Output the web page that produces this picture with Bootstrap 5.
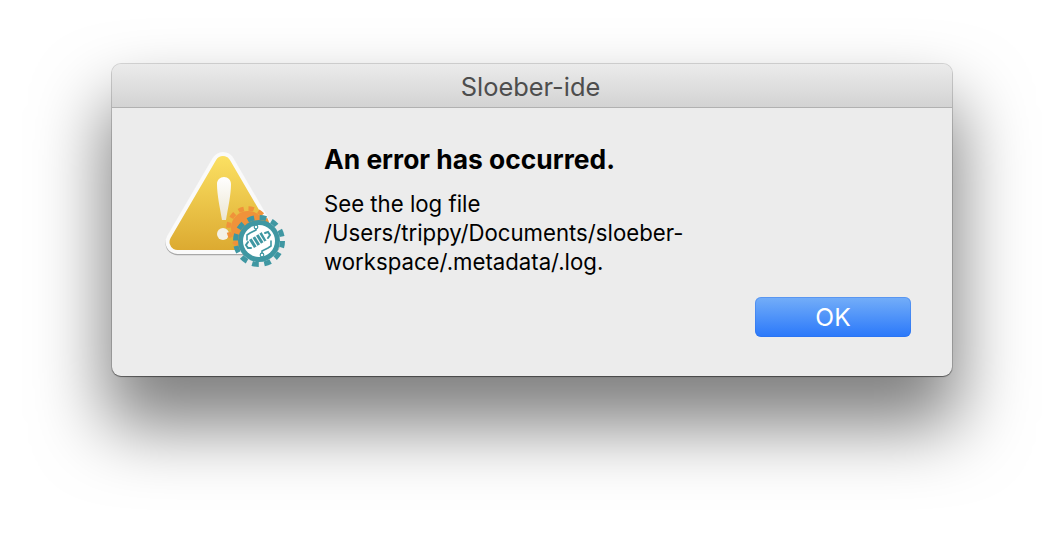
<!DOCTYPE html>
<html lang="en">
<head>
    <meta charset="UTF-8">
    <meta name="viewport" content="width=device-width, initial-scale=1.0">
    <title>Sloeber-ide</title>
    <link href="https://cdn.jsdelivr.net/npm/bootstrap@5.3.0/dist/css/bootstrap.min.css" rel="stylesheet">
    <style>
        html, body { height: 100%; }
        body { background: #fff; overflow: hidden; font-family: Inter, "Liberation Sans", sans-serif; color: #000; }
        .dlg-stage { padding: 64px 0 0 112px; }
        .dlg-window { width: 840px; height: 312px; background: #ececec; border-radius: 9px; box-shadow: 0 0 0 1px rgba(0,0,0,.14), 0 1px 1px rgba(0,0,0,.4), 0 44px 70px 6px rgba(0,0,0,.5); }
        .dlg-title { height: 44px; background: linear-gradient(#ebebeb, #d3d3d3); border-bottom: 1px solid #b1b1b1; border-radius: 9px 9px 0 0; font-size: 25.4px; color: #4d4d4d; line-height: 46px; padding-right: 3px; }
        .dlg-body { height: 268px; padding: 32px 41px 39px 38px; }
        .dlg-icon { width: 150px; height: 130px; margin-right: 24px; flex: none; }
        .dlg-heading { font-size: 26.4px; font-weight: 700; line-height: 32px; margin: 3px 0 14px; }
        .dlg-text { font-size: 22.2px; line-height: 29px; width: 380px; margin: 0; }
        .dlg-ok { width: 156px; height: 40px; padding: 0; border: 0; border-radius: 6px; background: linear-gradient(#74aef8, #2a78fa); box-shadow: inset 0 0 0 1px rgba(40,110,230,.35); color: #fff; font-size: 24.6px; line-height: 40px; }
    </style>
</head>
<body>
    <div class="dlg-stage">
        <div class="dlg-window d-flex flex-column">
            <div class="dlg-title text-center">Sloeber-ide</div>
            <div class="dlg-body d-flex flex-column">
                <div class="d-flex flex-grow-1">
                    <svg class="dlg-icon" viewBox="0 0 150 130" aria-hidden="true">
                        <defs>
                            <linearGradient id="warn" gradientUnits="userSpaceOnUse" x1="0" y1="16" x2="0" y2="110">
                                <stop offset="0" stop-color="#fbe062"/>
                                <stop offset="1" stop-color="#dcaa31"/>
                            </linearGradient>
                            <linearGradient id="bang" x1="0" y1="0" x2="0" y2="1">
                                <stop offset="0" stop-color="#ffffff"/>
                                <stop offset="1" stop-color="#ece6d2"/>
                            </linearGradient>
                        </defs>
                        <polygon points="73,24 27.5,102 118.5,102" fill="#a8a8a8" stroke="#a8a8a8" stroke-width="24" stroke-linejoin="round" transform="translate(0 1.2)"/>
                        <polygon points="73,24 27.5,102 118.5,102" fill="#fafafa" stroke="#fafafa" stroke-width="24" stroke-linejoin="round"/>
                        <polygon points="73,24 27.5,102 118.5,102" fill="url(#warn)" stroke="url(#warn)" stroke-width="16" stroke-linejoin="round"/>
                        <path d="M74 37c4 0 7 3 7 7 0 11-3 24-5 36h-4c-2-12-5-25-5-36 0-4 3-7 7-7z" fill="url(#bang)"/>
                        <circle cx="73" cy="94" r="6" fill="#f4f1e6"/>
                        <!-- orange gear behind -->
                        <circle cx="98" cy="88" r="17" fill="#f0923a"/>
                        <circle cx="98" cy="88" r="19.5" fill="none" stroke="#f0923a" stroke-width="4.5" stroke-dasharray="5.4 4.8"/>
                        <!-- teal gear -->
                        <circle cx="109" cy="101" r="21" fill="#3f97a2"/>
                        <circle cx="109" cy="101" r="23.5" fill="none" stroke="#3f97a2" stroke-width="5" stroke-dasharray="6.7 5.6"/>
                        <circle cx="109" cy="101" r="16" fill="#fff"/>
                        <g fill="none" stroke="#3f97a2" stroke-width="1.6" stroke-linecap="round">
                            <path d="M99 100l13-8 5 8-13 8z" fill="#3f97a2" stroke="none"/>
                            <path d="M102 98l5 8M105.500 96l5 8M109 94l5 8M112.500 92.500l4 7" stroke="#fff" stroke-width="1.2"/>
                            <path d="M115 93l3-1 2 3-2 3" stroke-width="2"/>
                            <path d="M101 108l-3 0-2-3 2-3" stroke-width="2"/>
                            <path d="M106 88v2l-6 3-3 2v5"/>
                            <path d="M112 114v-3l6-3 3-2v-5"/>
                        </g>
                        <circle cx="106" cy="87" r="1.8" fill="#fff" stroke="#3f97a2" stroke-width="1.2"/>
                        <circle cx="112" cy="115" r="1.8" fill="#fff" stroke="#3f97a2" stroke-width="1.2"/>
                    </svg>
                    <div>
                        <h1 class="dlg-heading">An error has occurred.</h1>
                        <p class="dlg-text">See the log file /Users/trippy/Documents/sloeber-workspace/.metadata/.log.</p>
                    </div>
                </div>
                <div class="d-flex justify-content-end">
                    <button type="button" class="btn dlg-ok">OK</button>
                </div>
            </div>
        </div>
    </div>
    <script src="https://cdn.jsdelivr.net/npm/bootstrap@5.3.0/dist/js/bootstrap.bundle.min.js"></script>
</body>
</html>
